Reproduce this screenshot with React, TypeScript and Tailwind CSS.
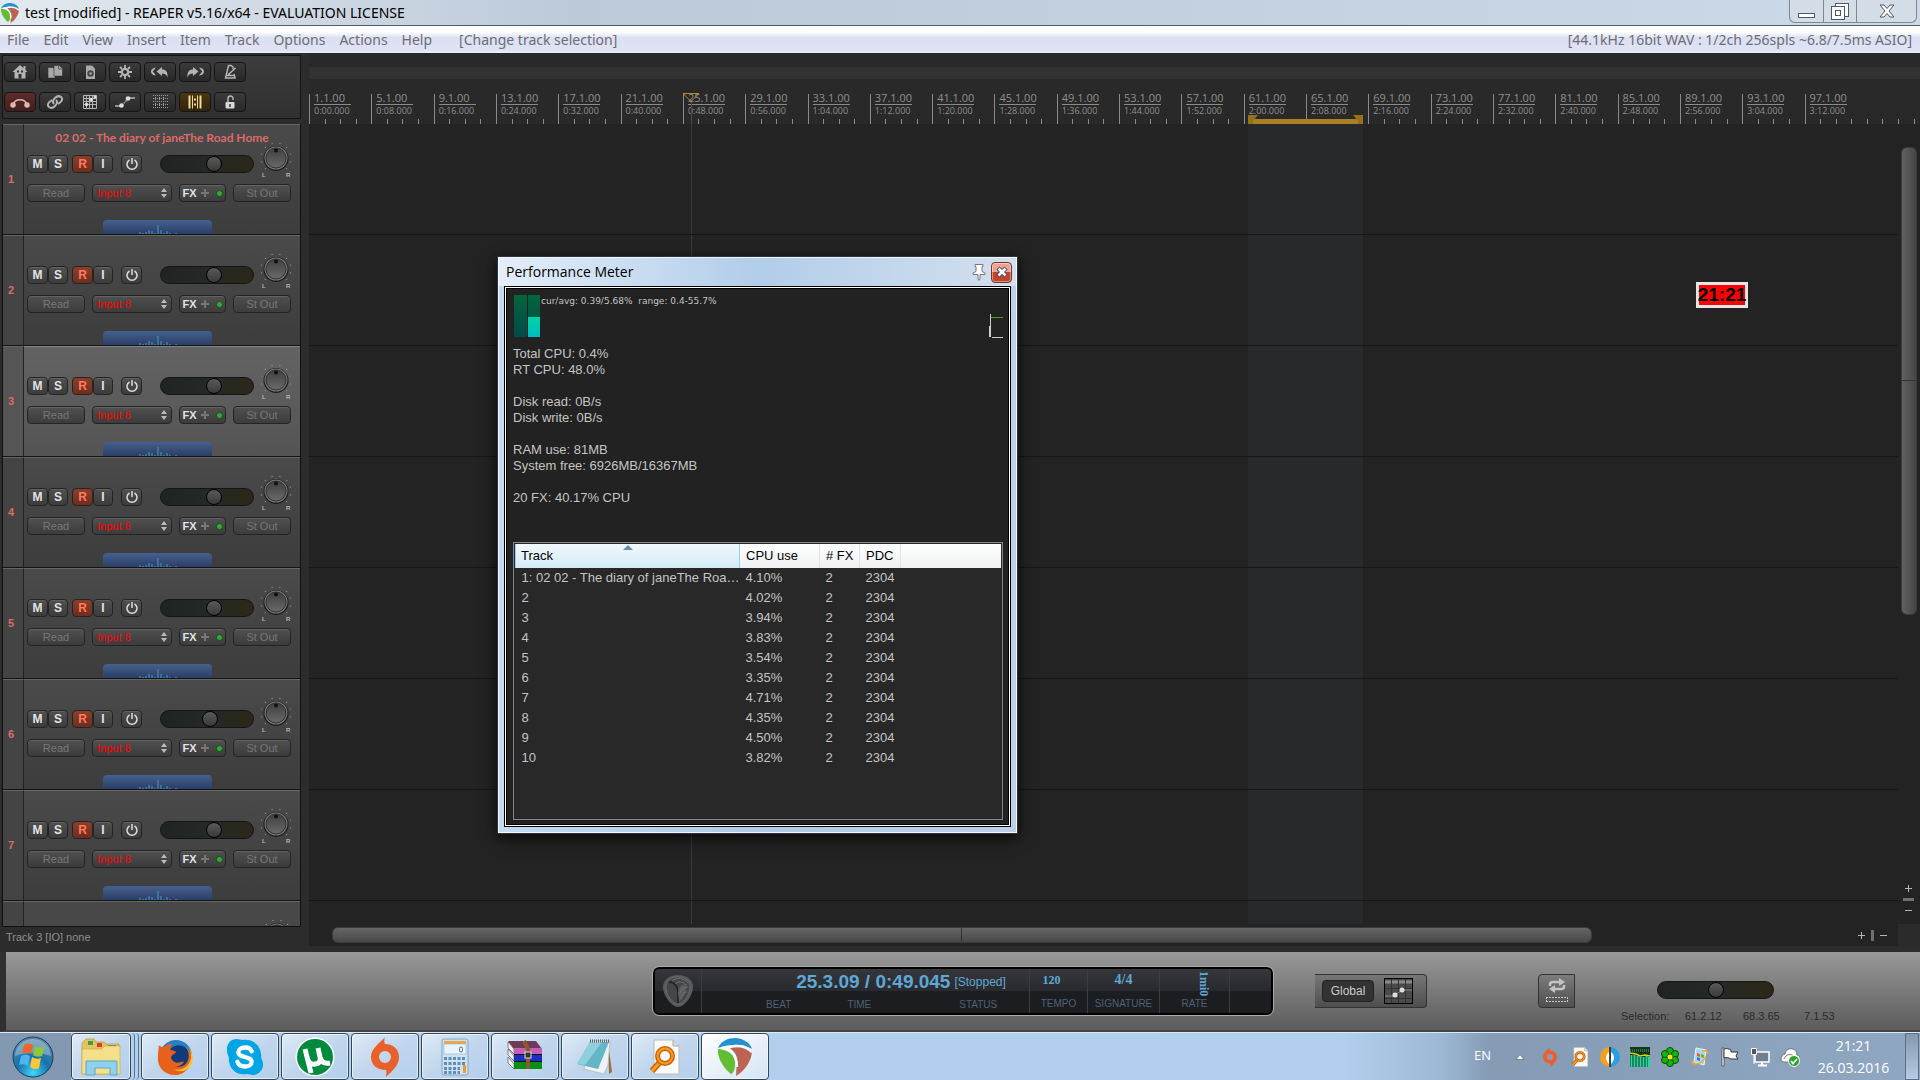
import type { ReactNode } from 'react'
import { clsx } from 'clsx'

// Number of bars that fit in the arrange view
const VISIBLE_BARS = 102
const barToPercent = (bar: number) => `${((bar - 1) / VISIBLE_BARS) * 100}%`

const SELECTION = { start: 61.28, end: 68.66 }
const EDIT_CURSOR = 25.52

const MENUS = ['File', 'Edit', 'View', 'Insert', 'Item', 'Track', 'Options', 'Actions', 'Help']

const TRACKS = [
  { id: 1, name: '02 02 - The diary of janeThe Road Home', volume: 59, cpu: '4.10%' },
  { id: 2, name: '', volume: 59, cpu: '4.02%' },
  { id: 3, name: '', volume: 59, cpu: '3.94%' },
  { id: 4, name: '', volume: 59, cpu: '3.83%' },
  { id: 5, name: '', volume: 59, cpu: '3.54%' },
  { id: 6, name: '', volume: 54, cpu: '3.35%' },
  { id: 7, name: '', volume: 59, cpu: '4.71%' },
  { id: 8, name: '', volume: 59, cpu: '4.35%' },
  { id: 9, name: '', volume: 59, cpu: '4.50%' },
  { id: 10, name: '', volume: 59, cpu: '3.82%' },
]

// Tracks that fit fully in the panel, the next one is only a stub
const FULL_TRACKS = 7
const SELECTED_TRACK = 3

const RULER = Array.from({ length: 25 }, (_, i) => {
  const seconds = i * 8
  return {
    bar: `${i * 4 + 1}.1.00`,
    time: `${Math.floor(seconds / 60)}:${String(seconds % 60).padStart(2, '0')}.000`,
  }
})

const KNOB_DOTS = [-135, -105, -75, -45, -15, 15, 45, 75, 105, 135].map((deg) => {
  const a = ((deg - 90) * Math.PI) / 180
  return { x: 17 + Math.cos(a) * 15, y: 17 + Math.sin(a) * 15 }
})

/* ---------- toolbar icons ---------- */

function ToolIcon({ children }: { children: ReactNode }) {
  return (
    <svg viewBox="0 0 20 16" className="w-5 h-4" fill="none" stroke="#b4b4b4" strokeWidth="1.5">
      {children}
    </svg>
  )
}

const toolbarRows = [
  [
    {
      label: 'New project',
      icon: (
        <g fill="#b4b4b4" stroke="none">
          <path d="M10 1 2.500 8h2v6.500h11V8h2l-2-2V2h-2v2.200z" />
          <path d="M8.500 10h3v4.500h-3zM7 6.500h2v2H7zM11 6.500h2v2h-2z" fill="#303030" />
        </g>
      ),
    },
    {
      label: 'Open project',
      icon: (
        <g fill="#a8a8a8" stroke="#303030" strokeWidth="0.600">
          <path d="M3 3.500h5l2 2V14H3z" />
          <path d="M9 1.500h5l3.500 3V12H9z" />
          <path d="M13.500 1.500v3.500h4" />
        </g>
      ),
    },
    {
      label: 'Save project',
      icon: (
        <g stroke="none">
          <path d="M6 1.500h6l3 3V15H6z" fill="#aaa" />
          <circle cx="10.500" cy="9.500" r="3.200" fill="#444" />
          <circle cx="10.500" cy="9.500" r="1.300" fill="#aaa" />
        </g>
      ),
    },
    {
      label: 'Project settings',
      icon: (
        <g>
          <circle cx="10" cy="8" r="3.200" strokeWidth="2.200" />
          <path d="M10 1v3M10 12v3M3 8h3M14 8h3M5 3l2 2M13 11l2 2M5 13l2-2M13 5l2-2" strokeWidth="1.800" />
        </g>
      ),
    },
    {
      label: 'Undo',
      icon: (
        <g fill="#b4b4b4" stroke="none">
          <path d="M12 3 6.500 7.500 12 12V9.500c3 0 4.500 1 5.500 4C18 8 16 5.500 12 5.500z" />
          <path d="M6 3.500C2 4 1 6 1 7.500S2 11 6 11.500L2.800 7.500z" />
        </g>
      ),
    },
    {
      label: 'Redo',
      icon: (
        <g fill="#b4b4b4" stroke="none">
          <path d="M8 3l5.500 4.500L8 12V9.500c-3 0-4.500 1-5.500 4C2 8 4 5.500 8 5.500z" />
          <path d="M14 3.500c4 .5 5 2.500 5 4s-1 3.500-5 4l3.200-4z" />
        </g>
      ),
    },
    {
      label: 'Metronome',
      icon: (
        <g>
          <path d="M13 5V3L11 1.500H8.500L5.500 14h9.500l-1-4" />
          <path d="M9 10l6.500-6M6 11.500h8M8 10h2" />
        </g>
      ),
    },
  ],
  [
    {
      label: 'Auto-crossfade',
      tone: 'red',
      icon: (
        <g stroke="#e3b5b0">
          <path d="M3 11c2-7 12-7 14 0" />
          <circle cx="3" cy="11" r="2" fill="#e3b5b0" />
          <circle cx="17" cy="11" r="2" fill="#e3b5b0" />
        </g>
      ),
    },
    {
      label: 'Item grouping',
      icon: (
        <g strokeWidth="2">
          <path d="M9 10c-2-2-1-4 1-6s4-2.500 6-1 1 4-1 5.500l-2 1.500" />
          <path d="M11 6c2 2 1 4-1 6s-4 2.500-6 1-1-4 1-5.500L7 6" />
        </g>
      ),
    },
    {
      label: 'Ripple editing',
      icon: (
        <g strokeWidth="1">
          <path d="M3.500 1.500h13v13h-13zM6.500 1v14M9.500 1v14M12.500 1v14M3 4.500h14M3 7.500h14M3 10.500h14" />
          <circle cx="6.500" cy="10.500" r="1.800" fill="#ddd" stroke="none" />
          <circle cx="11" cy="5.500" r="1.800" fill="#ddd" stroke="none" />
          <circle cx="15" cy="3" r="1.500" fill="#ddd" stroke="none" />
        </g>
      ),
    },
    {
      label: 'Envelope points',
      icon: (
        <g>
          <path d="M0 12h6M14 4h6" />
          <path d="M7 11l6-6" strokeDasharray="1.500 1" />
          <circle cx="6.500" cy="11.500" r="2.300" fill="#ddd" stroke="none" />
          <circle cx="13" cy="4.500" r="2.300" fill="#ddd" stroke="none" />
        </g>
      ),
    },
    {
      label: 'Grid lines',
      icon: (
        <g strokeWidth="1" stroke="#999">
          <path d="M3 1.500h15M3 4.500h15M3 7.500h15M3 10.500h15M3 13.500h15" strokeDasharray="1 1" />
          <path d="M5.500 1v14M9.500 1v14M13.500 1v14" strokeDasharray="1 1" />
        </g>
      ),
    },
    {
      label: 'Snap',
      tone: 'amber',
      icon: (
        <g stroke="#f1dc98">
          <path d="M4.500 1.500v13M15.500 1.500v13" strokeWidth="2" />
          <path d="M7.500 1.500v13M12.500 1.500v13" strokeWidth="1" />
          <path d="M9 5.500h2M9 10.500h2" strokeWidth="2" />
        </g>
      ),
    },
    {
      label: 'Locking',
      icon: (
        <g>
          <path d="M8 8V4.500a2.500 2.500 0 0 1 5 0V6" />
          <rect x="5.500" y="8" width="9" height="6.500" rx="1" fill="#d8d8d8" stroke="none" />
          <path d="M10 10v3" stroke="#333" />
        </g>
      ),
    },
  ],
]

function Toolbar() {
  return (
    <div className="h-[71px] shrink-0 bg-[#2c2c2c] pt-[2px]">
      <div className="ml-[2px] flex h-16 w-[299px] flex-col gap-[10px] border border-[#151515] bg-linear-to-b from-[#3c3c3c] to-[#303030] px-px py-[6px]">
        {toolbarRows.map((row, i) => (
          <div key={i} className="flex gap-[3px]">
            {row.map((tool) => (
              <button
                key={tool.label}
                aria-label={tool.label}
                className={clsx(
                  'flex h-5 w-8 items-center justify-center rounded border border-[#151515] bg-linear-to-b',
                  'tone' in tool && tool.tone === 'red' && 'from-[#5e2c29] to-[#3f1f1d]',
                  'tone' in tool && tool.tone === 'amber' && 'from-[#4b3610] to-[#2f240d]',
                  !('tone' in tool) && 'from-[#3a3a3a] to-[#292929]'
                )}
              >
                <ToolIcon>{tool.icon}</ToolIcon>
              </button>
            ))}
          </div>
        ))}
      </div>
    </div>
  )
}

/* ---------- track panel ---------- */

const trackButton =
  'flex items-center justify-center h-[18px] rounded-sm border border-[#242424] bg-linear-to-b from-[#505050] to-[#3c3c3c] shadow-[inset_0_1px_0_#626262]'

const fader =
  'appearance-none rounded-full border border-[#151515] bg-linear-to-r from-[#1f2422] via-[#242826] to-[#2c2718] [&::-webkit-slider-thumb]:appearance-none [&::-webkit-slider-thumb]:size-4 [&::-webkit-slider-thumb]:rounded-full [&::-webkit-slider-thumb]:border [&::-webkit-slider-thumb]:border-black [&::-webkit-slider-thumb]:bg-linear-to-b [&::-webkit-slider-thumb]:from-[#5a5a5a] [&::-webkit-slider-thumb]:to-[#3a3a3a]'

function PanKnob({ labels = true }: { labels?: boolean }) {
  return (
    <svg viewBox="0 0 34 40" className="h-10 w-[34px] shrink-0">
      <defs>
        <linearGradient id="knob" x1="0" y1="0" x2="0" y2="1">
          <stop offset="0" stopColor="#3f3f3f" />
          <stop offset="1" stopColor="#6a6a6a" />
        </linearGradient>
      </defs>
      {KNOB_DOTS.map((d) => (
        <circle key={`${d.x}`} cx={d.x} cy={d.y} r="0.7" fill="#8b8b8b" />
      ))}
      <circle cx="17" cy="17.500" r="12.500" fill="#1d1d1d" />
      <circle cx="17" cy="17" r="11.500" fill="#777" />
      <circle cx="17" cy="17" r="10" fill="url(#knob)" stroke="#303030" />
      <circle cx="17" cy="9.500" r="2" fill="#111" />
      {labels && (
        <g fontSize="6" fontWeight="bold" fill="#b5b5b5" fontFamily="Liberation Sans, sans-serif">
          <text x="3" y="36">L</text>
          <text x="27" y="36">R</text>
        </g>
      )}
    </svg>
  )
}

function TrackPanel({ track }: { track: (typeof TRACKS)[number] }) {
  const selected = track.id === SELECTED_TRACK
  return (
    <div className="flex h-[111px] shrink-0 border-b border-[#141414]">
      <div
        className={clsx(
          'flex w-[21px] items-center justify-center border-t border-r border-t-[#666] border-r-[#222] pr-1 text-[11px] font-bold text-[#dc6a6a]',
          selected ? 'bg-[#555]' : 'bg-[#444]'
        )}
      >
        {track.id}
      </div>
      <div
        className={clsx(
          'flex min-w-0 flex-1 flex-col border-t bg-linear-to-b pl-[3px]',
          selected ? 'border-[#858585] from-[#636363] to-[#545454]' : 'border-[#666] from-[#4a4a4a] to-[#3d3d3d]'
        )}
      >
        <div className="h-[30px] pt-[4px] pr-[3px] text-center font-['Lato','Open_Sans',sans-serif] text-xs leading-[18px] font-bold text-[#dc6a6a]">
          {track.name}
        </div>
        <div className="flex h-[29px] items-start text-xs font-bold text-[#e2e2e2]">
          <button className={clsx(trackButton, 'w-[21px]')}>M</button>
          <button className={clsx(trackButton, 'w-5')}>S</button>
          <button className="ml-1 flex h-[18px] w-[21px] items-center justify-center rounded-sm border border-[#242424] bg-linear-to-b from-[#8b3f2a] to-[#6f2d1d] text-[#ff7a60]">
            R
          </button>
          <button className={clsx(trackButton, 'w-5')}>I</button>
          <button aria-label="Bypass FX" className={clsx(trackButton, 'ml-2 w-[21px]')}>
            <svg viewBox="0 0 14 14" className="size-[14px]" fill="none" stroke="#ddd" strokeWidth="1.500">
              <path d="M4.500 3a5 5 0 1 0 5 0M7 1v6" />
            </svg>
          </button>
          <input
            type="range"
            aria-label={`Track ${track.id} volume`}
            defaultValue={track.volume}
            className={clsx(fader, 'ml-[18px] h-[18px] w-[94px]')}
          />
          <div className="-mt-[14px] ml-[5px] h-[30px]">
            <PanKnob />
          </div>
        </div>
        <div className="flex gap-[7px] text-[11px] text-[#777]">
          <button className={clsx(trackButton, 'w-[58px]')}>Read</button>
          <label className="relative flex">
            <select
              aria-label={`Track ${track.id} input`}
              className={clsx(trackButton, 'w-20 appearance-none pl-1 text-[#f00]')}
            >
              <option>Input 8</option>
            </select>
            <svg viewBox="0 0 6 10" className="absolute top-1 right-[5px] h-[10px] w-[6px]" fill="#bbb">
              <path d="M3 0l3 4H0zM3 10l3-4H0z" />
            </svg>
          </label>
          <button className={clsx(trackButton, 'w-[47px] gap-1')}>
            <span className="font-bold text-[#e2e2e2]">FX</span>
            <svg viewBox="0 0 8 8" className="size-2" stroke="#777" strokeWidth="2">
              <path d="M4 0v8M0 4h8" />
            </svg>
            <span className="ml-[3px] size-[7px] rounded-full border border-[#1c4d1c] bg-[#35a935]" />
          </button>
          <button className={clsx(trackButton, 'w-[58px]')}>St Out</button>
        </div>
        <div className="mt-auto ml-[76px] h-[14px] w-[109px] overflow-hidden rounded-t bg-linear-to-b from-[#46608e] to-[#2b3f66]">
          <svg viewBox="0 0 109 14" className="h-[14px] w-full" stroke="#3f7fb0" strokeWidth="1.500">
            <path d="M37 14v-2M40 14v-1M43 14v-2M46 14v-4M49 14v-3M52 14v-1M55 14V5M58 14v-4M61 14v-1M64 14v-3M67 14v-1M73 14v-1" />
          </svg>
        </div>
      </div>
    </div>
  )
}

function TrackStub() {
  return (
    <div className="flex min-h-0 flex-1 overflow-hidden">
      <div className="w-[21px] border-t border-r border-t-[#666] border-r-[#222] bg-[#444]" />
      <div className="flex flex-1 justify-end border-t border-[#666] bg-[#484848] pt-4 pr-[6px]">
        <PanKnob labels={false} />
      </div>
    </div>
  )
}

/* ---------- arrange view ---------- */

function Ruler() {
  return (
    <div className="h-[71px] shrink-0 overflow-hidden bg-[#292929] pt-[14px] text-[#8f8f8f]">
      <div className="h-3 bg-[#323232]" />
      <div className="relative mt-[15px] mr-[22px] flex h-[30px] font-['Open_Sans',sans-serif]">
        {[...RULER, null].map((mark, i) => (
          <div
            key={i}
            className={clsx('relative shrink-0 pl-1', mark && 'border-l border-[#8a8a8a]')}
            style={{ width: `${400 / VISIBLE_BARS}%` }}
          >
            {mark && (
              <>
                <div className="h-[11px] w-[37px] border-b border-[#8a8a8a] text-[11px] leading-[8px]">{mark.bar}</div>
                <div className="pt-px text-[9px] leading-[10px]">{mark.time}</div>
              </>
            )}
            <div className="absolute inset-x-0 bottom-0 flex h-[5px]">
              {[0, 1, 2, 3].map((t) => (
                <span key={t} className={clsx('flex-1', (t > 0 || !mark) && 'border-l border-[#8a8a8a]')} />
              ))}
            </div>
          </div>
        ))}
        {/* Time selection */}
        <div
          className="absolute bottom-0 h-[9px]"
          style={{
            left: barToPercent(SELECTION.start),
            width: `${((SELECTION.end - SELECTION.start) / VISIBLE_BARS) * 100}%`,
          }}
        >
          <div className="absolute inset-x-0 bottom-0 h-[5px] bg-[#ab8024]" />
          <svg viewBox="0 0 10 9" className="absolute bottom-0 left-0 h-[9px] w-[10px]">
            <path d="M0 0h10L5 6v3H0z" fill="#94701f" />
          </svg>
          <svg viewBox="0 0 10 9" className="absolute right-0 bottom-0 h-[9px] w-[10px]">
            <path d="M10 0H0l5 6v3h5z" fill="#94701f" />
          </svg>
        </div>
        {/* Edit cursor handle */}
        <div className="absolute -top-px bottom-0 w-4 -translate-x-1/2" style={{ left: barToPercent(EDIT_CURSOR) }}>
          <svg viewBox="0 0 16 31" className="h-[31px] w-4" fill="none">
            <path d="M0 .5h16L8 8.500z" stroke="#b98a26" />
            <path d="M8.500 9v22" stroke="#4a4a4a" />
          </svg>
        </div>
      </div>
    </div>
  )
}

function ZoomControl({ vertical }: { vertical?: boolean }) {
  return (
    <div className={clsx('flex items-center gap-[6px]', vertical && 'flex-col')}>
      <button aria-label="Zoom in" className="size-[7px]">
        <svg viewBox="0 0 7 7" className="size-[7px]" stroke="#b5b5b5">
          <path d="M3.500 0v7M0 3.500h7" />
        </svg>
      </button>
      <span className={clsx('bg-[#6f6f6f]', vertical ? 'h-[3px] w-[11px]' : 'h-[11px] w-[3px]')} />
      <button aria-label="Zoom out" className="size-[7px]">
        <svg viewBox="0 0 7 7" className="size-[7px]" stroke="#b5b5b5">
          <path d="M0 3.500h7" />
        </svg>
      </button>
    </div>
  )
}

function ArrangeView() {
  return (
    <section className="flex min-w-0 flex-1 flex-col bg-[#2c2c2c] pb-[6px]">
      <Ruler />
      <div className="flex min-h-0 flex-1 bg-[#232323]">
        <div className="relative min-w-0 flex-1 overflow-hidden">
          <div
            className="absolute inset-y-0 bg-[#28292a]"
            style={{
              left: barToPercent(SELECTION.start),
              width: `${((SELECTION.end - SELECTION.start) / VISIBLE_BARS) * 100}%`,
            }}
          />
          <div className="absolute inset-y-0 w-px bg-[#3a3a3a]" style={{ left: barToPercent(EDIT_CURSOR) }} />
          <div className="relative">
            {TRACKS.slice(0, FULL_TRACKS).map((t) => (
              <div key={t.id} className="h-[111px] border-b border-[#171717]" />
            ))}
          </div>
        </div>
        <div className="flex w-[22px] flex-col items-center justify-between pt-[23px] pr-px pb-[10px]">
          <div className="flex h-[61%] w-4 flex-col justify-center rounded-md border border-[#3c3c3c] bg-linear-to-r from-[#616161] to-[#464646]">
            <span className="h-px bg-[#333]" />
          </div>
          <ZoomControl vertical />
        </div>
      </div>
      <div className="flex h-[22px] items-center bg-[#232323]">
        <div className="flex flex-1 items-center justify-between pr-2 pl-[23px]">
          <div className="flex h-4 w-[81%] justify-center rounded-md border border-[#3c3c3c] bg-linear-to-b from-[#666] to-[#484848]">
            <span className="w-px bg-[#333]" />
          </div>
          <ZoomControl />
        </div>
        <div className="ml-[3px] h-full w-[22px] bg-[#2b2b2b]" />
      </div>
    </section>
  )
}

/* ---------- performance meter ---------- */

function PerformanceMeter() {
  return (
    <div
      role="dialog"
      aria-label="Performance Meter"
      className="absolute top-[256px] left-[497px] flex h-[578px] w-[521px] flex-col border border-[#2b3540] bg-linear-to-r from-[#c3daf2] via-[#b0cbe6] to-[#bcd0e5] shadow-[0_4px_14px_#000c] ring-1 ring-white/80 ring-inset"
    >
      <header className="mx-px mt-px flex h-7 shrink-0 items-center bg-linear-to-r from-[#e3eefa] via-[#b2cde9] to-[#d3dfee] pr-1 pl-[7px]">
        <h2 className="flex-1 font-['Open_Sans',sans-serif] text-sm leading-5 text-black">Performance Meter</h2>
        <button aria-label="Pin window" className="mr-[5px]">
          <svg viewBox="0 0 14 17" className="h-[17px] w-[14px]" fill="#fff" stroke="#777" strokeWidth="1">
            <path d="M3 .5h8v2H10v5l3 1.500v1.500H8V15l-1 1.500L6 15v-4.500H1V9l3-1.500v-5H3z" />
          </svg>
        </button>
        <button
          aria-label="Close"
          className="flex h-[21px] w-[21px] items-center justify-center rounded-sm border border-[#6c3a36] bg-linear-to-b from-[#f0a293] from-50% to-[#c2452a] to-50% shadow-[inset_0_0_0_1px_#ffffff66]"
        >
          <svg viewBox="0 0 12 12" className="size-3">
            <path d="M2 2l8 8M10 2l-8 8" stroke="#4b4b5b" strokeWidth="4.500" />
            <path d="M2.500 2.500l7 7M9.500 2.500l-7 7" stroke="#fff" strokeWidth="2.500" />
          </svg>
        </button>
      </header>
      <div className="mx-[6px] mb-[6px] flex min-h-0 flex-1 flex-col border border-black bg-white p-px">
        <div className="flex min-h-0 flex-1 flex-col border border-black bg-[#222] pr-[5px] pb-[4px] pl-[6px] text-[13px] leading-4 text-[#c4c4c4]">
          <div className="flex h-[57px] pt-[6px] pl-px">
            <div className="flex h-[42px] gap-px">
              <span className="w-[13px] bg-linear-to-b from-[#04663a] to-[#04494a]" />
              <span className="flex w-3 flex-col justify-end bg-linear-to-b from-[#04663a] to-[#04494a]">
                <span className="h-5 bg-linear-to-b from-[#00d4a8] to-[#00bdbd]" />
              </span>
            </div>
            <span className="ml-px flex-1 font-['DejaVu_Sans',sans-serif] text-[9px] leading-3 whitespace-pre">
              cur/avg: 0.39/5.68%{'  '}range: 0.4-55.7%
            </span>
            <svg viewBox="0 0 14 26" className="mt-[18px] h-[26px] w-[14px]" fill="none" stroke="#ccc">
              <path d="M1.500 1v23M.5 13v11M3 24.500h11" />
              <path d="M2 4.500h12" stroke="#4aa514" />
            </svg>
          </div>
          <p>Total CPU: 0.4%</p>
          <p>RT CPU: 48.0%</p>
          <p className="mt-4">Disk read: 0B/s</p>
          <p>Disk write: 0B/s</p>
          <p className="mt-4">RAM use: 81MB</p>
          <p>System free: 6926MB/16367MB</p>
          <p className="mt-4">20 FX: 40.17% CPU</p>
          <div className="mt-9 min-h-0 flex-1 border border-[#85858d] bg-[#282828] p-px">
            <table className="w-full table-fixed">
              <thead>
                <tr className="h-6 bg-linear-to-b from-white to-[#eff1f3] text-left text-black">
                  <th className="relative w-[224px] border-r border-l border-[#8fd3f2] bg-linear-to-b from-[#f0f8fc] to-[#d5ebf5] pl-[5px] font-normal">
                    Track
                    <svg viewBox="0 0 10 5" className="absolute top-px left-1/2 h-[5px] w-[10px] -translate-x-1/2">
                      <path d="M0 5l5-5 5 5z" fill="#5d93b0" />
                    </svg>
                  </th>
                  <th className="w-20 border-r border-[#dfe2e6] pl-[6px] font-normal">CPU use</th>
                  <th className="w-10 border-r border-[#dfe2e6] pl-[6px] font-normal whitespace-nowrap"># FX</th>
                  <th className="w-[41px] border-r border-[#dfe2e6] pl-[6px] font-normal">PDC</th>
                  <th />
                </tr>
              </thead>
              <tbody>
                {TRACKS.map((t) => (
                  <tr key={t.id} className="h-5">
                    <td className="truncate pl-[6px]">{t.name ? `${t.id}: ${t.name}` : t.id}</td>
                    <td className="pl-[6px]">{t.cpu}</td>
                    <td className="pl-[6px]">2</td>
                    <td className="pl-[6px]">2304</td>
                    <td />
                  </tr>
                ))}
              </tbody>
            </table>
          </div>
        </div>
      </div>
    </div>
  )
}

/* ---------- transport ---------- */

const transportCell = 'flex flex-col items-center justify-between border-l border-[#3c3d42] pt-[2px] pb-[2px]'
const transportLabel = 'text-[10px] leading-[14px] text-[#4f6177]'

function Transport() {
  return (
    <section className="flex h-20 shrink-0 items-center border-b-2 border-l-[6px] border-[#444] border-l-[#303030] bg-linear-to-b from-[#999] to-[#5c5c5c]">
      <div className="flex-[647]" />
      <div className="flex h-12 w-[620px] rounded-md border-2 border-black bg-linear-to-b from-[#36373c] from-0% via-[#292a2e] via-50% to-[#1c1d21] to-50% text-[#5fa8d6] outline outline-[#aaa]">
        <div className="flex w-[46px] items-center justify-center">
          <svg viewBox="0 0 32 34" className="h-[34px] w-8">
            <path d="M16 1C25 1 31 6 31 13c0 9-9 20-15 20S1 22 1 13C1 6 7 1 16 1z" fill="#5a5a5c" />
            <path d="M16 3c7 0 12 4 12 10 0 8-7 17-12 17S4 21 4 13C4 7 9 3 16 3z" fill="#454649" stroke="#7a7a7a" strokeWidth=".6" />
            <path d="M7 8c6 0 9 5 9 11v10" fill="none" stroke="#1f1f22" strokeWidth="1.500" />
            <path d="M16 19c0-6 3-9 9-9-1 8-3 14-8 18" fill="#5b5b5e" />
            <path d="M13 10c3-3 8-3 11 1M10 7c5-4 12-3 16 2M18 19c1-4 4-6 8-6M19 24c1-4 3-6 6-6" fill="none" stroke="#808080" strokeWidth=".7" />
          </svg>
        </div>
        <div className="flex flex-1 flex-col justify-between border-l border-[#3c3d42] pb-px">
          <div className="flex items-center justify-center gap-1 pt-px pl-[71px] leading-6">
            <span className="text-[19px] font-bold">25.3.09 / 0:49.045</span>
            <span className="text-xs">[Stopped]</span>
          </div>
          <div className={clsx(transportLabel, 'flex gap-14 pl-16')}>
            <span>BEAT</span>
            <span className="mr-8">TIME</span>
            <span>STATUS</span>
          </div>
        </div>
        <div className={clsx(transportCell, 'w-[58px]')}>
          <span className="mr-[14px] font-['Liberation_Serif',serif] text-xs leading-[18px] font-bold">120</span>
          <span className={transportLabel}>TEMPO</span>
        </div>
        <div className={clsx(transportCell, 'w-[72px]')}>
          <span className="font-['Liberation_Serif',serif] text-sm leading-[18px] font-bold">4/4</span>
          <span className={transportLabel}>SIGNATURE</span>
        </div>
        <div className={clsx(transportCell, 'w-[70px]')}>
          <span className="ml-[18px] h-[26px] font-['Liberation_Serif',serif] text-xs leading-3 font-bold [writing-mode:vertical-rl]">
            1mi0
          </span>
          <span className={transportLabel}>RATE</span>
        </div>
        <div className="w-[42px] border-l border-[#3c3d42]" />
      </div>
      <div className="flex flex-[647] items-center">
        <div className="ml-[42px] flex h-[34px] w-28 items-center justify-between rounded-r border-y border-r border-[#333] bg-linear-to-b from-[#777] to-[#4e4e4e] pr-[13px] pl-[7px]">
          <button className="h-[22px] w-[52px] rounded-sm border border-[#222] bg-[#333] text-xs text-[#ccc]">Global</button>
          <button aria-label="Automation mode" className="h-[26px] w-[29px] border border-black bg-[#4b4b4b]">
            <svg viewBox="0 0 27 24" className="h-6 w-[27px]" fill="none">
              <path d="M0 3h27" stroke="#8a8a8a" strokeWidth="3" />
              <path d="M6.500 0v24M13.500 0v24M20.500 0v24M0 9.500h27M0 19.500h27" stroke="#333" />
              <path d="M0 17h9l8-6h10" stroke="#888" />
              <circle cx="10" cy="16" r="2.500" fill="#ddd" />
              <circle cx="17" cy="11" r="2.500" fill="#ddd" />
            </svg>
          </button>
        </div>
        <button
          aria-label="Toggle repeat"
          className="ml-[111px] flex h-[34px] w-[37px] items-center justify-center rounded-l border border-[#333] bg-linear-to-b from-[#7c7c7c] to-[#505050]"
        >
          <svg viewBox="0 0 24 28" className="h-7 w-6" fill="none" stroke="#c4c4c4">
            <path d="M5 9V7.500C5 6 6 5 8 5h7" strokeWidth="2.500" />
            <path d="M19 8v1.500c0 1.500-1 2.500-3 2.500H9" strokeWidth="2.500" />
            <path d="M14 1l6 4-6 4zM10 8l-6 4 6 4z" fill="#c4c4c4" stroke="none" />
            <path d="M1 20.500h22M1 24.500h22M1.500 20v5M22.500 20v5" strokeDasharray="2 1" />
          </svg>
        </button>
        <div className="mt-[21px] ml-[46px] flex flex-col gap-[10px]">
          <input
            type="range"
            aria-label="Playback rate"
            defaultValue={50}
            className={clsx(fader, 'ml-9 h-[18px] w-[117px]')}
          />
          <div className="flex text-[11px] leading-[14px] text-[#2b2b2b]">
            <span className="w-16">Selection:</span>
            <span className="w-[58px]">61.2.12</span>
            <span className="w-[61px]">68.3.65</span>
            <span>7.1.53</span>
          </div>
        </div>
      </div>
    </section>
  )
}

/* ---------- taskbar ---------- */

function ReaperLogo({ className }: { className: string }) {
  return (
    <svg viewBox="0 0 36 38" className={className}>
      <path d="M1 10C4 3 11 0 18 0s15 4 17 11c-8-5-20-6-34-1z" fill="#2492cf" />
      <path d="M1 11c-1 7 4 18 13 25 3-1 4-6 4-11 0-7-5-13-17-14z" fill="#62bd33" />
      <path d="M12 10c8-4 17-3 23 3 0 9-7 20-16 25 1-12 2-22-7-28z" fill="#bb6454" />
      <path d="M5 10c9-1 15 7 15 19M10 10c9-4 19-2 25 4" fill="none" stroke="#fff" strokeWidth="2.500" />
    </svg>
  )
}

function OriginLogo({ className }: { className: string }) {
  return (
    <svg viewBox="0 0 32 40" className={className}>
      <path
        d="M16 0c-1 3-1 5 0 7 9 0 14 6 14 13 0 9-8 15-13 20 0-3 1-5 0-7C7 33 2 27 2 20 2 11 11 6 16 0zm0 14a6 6 0 1 0 0 12 6 6 0 0 0 0-12z"
        fill="#e9602c"
        fillRule="evenodd"
      />
    </svg>
  )
}

function SearchDocIcon({ className }: { className: string }) {
  return (
    <svg viewBox="0 0 32 36" className={className}>
      <path d="M5 1h19l6 6v28H5z" fill="#fafafa" stroke="#bbb" />
      <path d="M24 1v6h6" fill="#ddd" stroke="#aaa" />
      <path d="M12 22l-9 10" stroke="#c95e0c" strokeWidth="6" />
      <path d="M12 22l-9 10" stroke="#f7a11b" strokeWidth="3" />
      <circle cx="16" cy="17" r="7.500" fill="#f6f6ff" stroke="#d0600c" strokeWidth="5" />
      <circle cx="16" cy="17" r="7.500" fill="none" stroke="#f9a01c" strokeWidth="2" />
    </svg>
  )
}

const TASKS = [
  {
    name: 'Firefox',
    icon: (
      <svg viewBox="0 0 40 40" className="size-9">
        <circle cx="21" cy="19" r="18" fill="#2a7fc4" />
        <circle cx="24" cy="19" r="12" fill="#123a78" />
        <path d="M2 7c2 2 4 2 6 2 3-3 6-4 9-3-2 2-3 4-2 6 2 1 5 1 6 2 0 2-3 3-5 5-1 3 1 6 5 7 3 1 6-1 9-1-2 4-6 6-11 5 9 3 15-2 16-9 1-5-1-10-3-13 5 5 8 12 6 18-3 9-10 14-18 14C8 40 0 31 1 20c0-5 1-9 1-13z" fill="#e6611c" />
        <path d="M34 8c5 7 5 14 1 20-4 5-10 7-16 6 8 4 17 1 20-8 2-7-1-14-5-18z" fill="#fbc02d" />
      </svg>
    ),
  },
  {
    name: 'Skype',
    icon: (
      <svg viewBox="0 0 40 40" className="size-[38px]">
        <path d="M11 1c3 0 5 1 6 1 12-2 21 7 20 19 1 2 2 4 2 7 0 6-5 11-11 11-2 0-4-1-6-1C10 40 2 31 3 20c-1-2-2-4-2-8C1 6 5 1 11 1z" fill="#00a5e5" />
        <path
          d="M27 14c-1-3-4-4-7-4-4 0-7 2-7 5 0 6 14 4 14 10 0 3-3 5-7 5s-7-2-8-5"
          fill="none"
          stroke="#fff"
          strokeWidth="4.500"
          strokeLinecap="round"
        />
      </svg>
    ),
  },
  {
    name: 'uTorrent',
    icon: (
      <svg viewBox="0 0 40 40" className="size-10">
        <circle cx="20" cy="20" r="19.500" fill="#fff" />
        <circle cx="20" cy="20" r="18" fill="#008a3e" />
        <path d="M10 12l6 24M12 20c1 5 4 8 8 7 4 0 6-3 5-7l-2-9M25 20c1 5 4 7 10 6" fill="none" stroke="#fff" strokeWidth="5" />
      </svg>
    ),
  },
  { name: 'Origin', icon: <OriginLogo className="h-10 w-8" /> },
  {
    name: 'Calculator',
    icon: (
      <svg viewBox="0 0 28 38" className="h-[38px] w-7">
        <rect x="1" y="1" width="26" height="36" rx="2" fill="#cfe1f2" stroke="#7fa6c8" />
        <rect x="3" y="3" width="22" height="3" fill="#f0a544" />
        <rect x="3" y="6" width="22" height="10" fill="#eaf4fb" stroke="#8db0cc" strokeWidth=".6" />
        <rect x="18.500" y="9" width="3" height="5" rx="1.500" fill="none" stroke="#4b6f93" />
        <path d="M3 20.500h22M3 25.500h22M3 30.500h16M3 34.500h16" stroke="#5f8cb8" strokeWidth="3" strokeDasharray="3 1.500" />
        <rect x="22" y="27" width="3" height="8" fill="#ee9a30" />
      </svg>
    ),
  },
  {
    name: 'WinRAR',
    icon: (
      <svg viewBox="0 0 36 30" className="mb-1 h-[30px] w-9">
        <path d="M1 1l6 8h28l-6-8z" fill="#6d3a58" />
        <path d="M1 2v6l6 6V9zM1 9v6l6 6v-5zM1 17v6l6 6v-5z" fill="#eee" stroke="#444" strokeWidth=".6" />
        <path d="M7 8h28v6H7z" fill="#c45fb4" />
        <path d="M7 15h28v6H7z" fill="#1c2fc4" />
        <path d="M7 22h28v7H7z" fill="#0b8f12" />
        <path d="M7 14.500h28M7 21.500h28" stroke="#111" />
        <path d="M17 1l4 8v20" fill="none" stroke="#8a5a2b" strokeWidth="4" />
        <rect x="18" y="12" width="6" height="6" fill="#333" stroke="#ddd" />
      </svg>
    ),
  },
  {
    name: 'Notepad',
    icon: (
      <svg viewBox="0 0 38 36" className="h-9 w-[38px]">
        <path d="M32 3l4 30-3 2z" fill="#99713a" />
        <path d="M14 2h20l-2 24-4 9-20-5z" fill="#eef2f4" stroke="#a9b4b8" strokeWidth=".7" />
        <path d="M14 3h19L22 30 1 25z" fill="#62b6c6" />
        <path d="M14 3h12L9 26l-8-1z" fill="#8fd0dc" />
        <path d="M14 2h20" stroke="#666" strokeWidth="3" strokeDasharray="1 1" />
      </svg>
    ),
  },
  { name: 'Search', icon: <SearchDocIcon className="h-9 w-8" /> },
  { name: 'REAPER', icon: <ReaperLogo className="h-[38px] w-9" />, active: true },
]

const TRAY = [
  { name: 'Origin', icon: <OriginLogo className="h-5 w-4" /> },
  { name: 'Search', icon: <SearchDocIcon className="h-5 w-[18px]" /> },
  {
    name: 'Audio driver',
    icon: (
      <svg viewBox="0 0 20 20" className="size-5">
        <path d="M10 0a10 10 0 0 0 0 20z" fill="#f5a01f" />
        <path d="M10 0a10 10 0 0 1 0 20z" fill="#2b9fe0" />
        <path d="M9 5c-4 3-4 8 0 12zM11 5c4 3 4 8 0 12z" fill="#fff" />
        <path d="M10 0v20" stroke="#222" strokeWidth="1.500" />
      </svg>
    ),
  },
  {
    name: 'CPU graph',
    icon: (
      <svg viewBox="0 0 20 20" className="size-5">
        <rect width="20" height="20" fill="#12351c" />
        <path d="M1.500 8v12M4.500 8v12M7.500 9v11M10.500 10v10M13.500 10v10M16.500 9v11M19 10v10" stroke="#27d5a3" strokeWidth="2" />
        <path d="M0 3.500h20" stroke="#2c7a34" strokeWidth="3" strokeDasharray="1 1" />
        <path d="M0 6l6 1 4 2 5-1 5 1" stroke="#d8d01d" strokeWidth="1.500" fill="none" />
      </svg>
    ),
  },
  {
    name: 'ICQ',
    icon: (
      <svg viewBox="0 0 20 20" className="size-5" fill="#17b50f" stroke="#064d04">
        <circle cx="10" cy="4" r="3.500" />
        <circle cx="15" cy="7" r="3.500" />
        <circle cx="15" cy="13" r="3.500" />
        <circle cx="10" cy="16" r="3.500" />
        <circle cx="5" cy="13" r="3.500" />
        <circle cx="5" cy="7" r="3.500" />
        <circle cx="10" cy="10" r="2.500" fill="#ffe11a" stroke="none" />
      </svg>
    ),
  },
  {
    name: 'Windows Update',
    icon: (
      <svg viewBox="0 0 20 20" className="size-5">
        <path d="M6 1l10 2-2 15-10-3z" fill="#a9d6f3" stroke="#e8f5ff" />
        <path d="M7 6l3 1v3L7 9z" fill="#ec5b2a" />
        <path d="M11 7l3 1v3l-3-1z" fill="#5fbb35" />
        <path d="M7 10l3 1v3l-3-1z" fill="#2c7fd0" />
        <path d="M1 14c3 5 12 3 15-5" fill="none" stroke="#f5a52a" strokeWidth="1.500" />
        <path d="M12 4c3-1 6 0 6 3" fill="none" stroke="#f5a52a" strokeWidth="1.500" />
      </svg>
    ),
  },
  {
    name: 'Action Center',
    icon: (
      <svg viewBox="0 0 20 20" className="size-5">
        <path d="M2 1v18h2V1z" fill="#fff" stroke="#333" strokeWidth=".7" />
        <path d="M4 2c3-1 5 0 7 1v2h7l-2 4 2 3h-7c-2-1-4-2-7-1z" fill="#fff" stroke="#333" />
      </svg>
    ),
  },
  {
    name: 'Network',
    icon: (
      <svg viewBox="0 0 20 20" className="size-5">
        <path d="M5 5h14v10H5z" fill="#6f7f90" stroke="#fff" strokeWidth="1.500" />
        <path d="M8 18.500h9M12 15v3" stroke="#fff" strokeWidth="2" />
        <path d="M1.500 1.500h5v6h-5zM4 8v9" fill="#555" stroke="#fff" />
      </svg>
    ),
  },
  {
    name: 'Cloud sync',
    icon: (
      <svg viewBox="0 0 20 20" className="size-5">
        <path d="M1 12c0-3 2-4 4-5C6 3 9 1 12 2c3 0 5 3 5 6 2 0 3 2 3 4s-2 3-4 3H5c-3 0-4-1-4-3z" fill="#fff" stroke="#555" strokeWidth=".7" />
        <path d="M4 12c2-5 7-6 11-2" fill="none" stroke="#777" />
        <circle cx="14" cy="14" r="5.500" fill="#27a52c" stroke="#fff" />
        <path d="M11 14l2 2.500 4-4.500" fill="none" stroke="#fff" strokeWidth="1.800" />
      </svg>
    ),
  },
]

const taskButton =
  'flex h-[47px] items-center justify-center rounded-sm border border-[#33475c] bg-linear-to-br from-[#dfeaf6] via-[#c1d6ed] to-[#b4cfec] shadow-[inset_0_0_0_1px_#ffffff99]'

function Taskbar() {
  return (
    <footer className="flex h-12 shrink-0 border-t border-[#dbe9f6] bg-[#b2d0ee] font-['Open_Sans',sans-serif]">
      <button aria-label="Start" className="flex w-[71px] shrink-0 items-center bg-[#8299b1] pl-3">
        <svg viewBox="0 0 42 42" className="size-[42px]">
          <defs>
            <radialGradient id="orb" cx="0.5" cy="0.9" r="0.9">
              <stop offset="0" stopColor="#3fd8f8" />
              <stop offset="0.45" stopColor="#1672ac" />
              <stop offset="1" stopColor="#5e87a8" />
            </radialGradient>
          </defs>
          <circle cx="21" cy="21" r="20" fill="url(#orb)" stroke="#1d3f5e" />
          <path d="M3 20C4 7 14 3 21 3s17 4 18 17c-10-4-26-4-36 0z" fill="#fff" opacity=".3" />
          <path d="M12 9c3-2 6-2 9 0l-2 9c-3-2-6-2-9 0z" fill="#f0642a" />
          <path d="M23 10c3 2 6 2 10 0l-3 10c-3 1-6 1-9-1z" fill="#8fc63c" />
          <path d="M9 20c3-2 6-2 9 0l-2 10c-3-2-6-2-9-1z" fill="#4db4ee" />
          <path d="M20 21c3 2 6 2 9 1l-2 10c-3 2-6 1-9-1z" fill="#fbc63a" />
        </svg>
      </button>
      <div className="flex gap-[2px]">
        <div className="flex w-[68px] shrink-0">
          <button aria-label="Explorer" className={clsx(taskButton, 'w-[60px]')}>
            <svg viewBox="0 0 40 38" className="h-[38px] w-10">
              <path d="M3 3l2-2h8l2 3h8l2 2h13v30H1V5z" fill="#e3c45f" stroke="#b8953a" strokeWidth=".7" />
              <path d="M7 3h5v4H7z" fill="#3f9a4b" />
              <path d="M16 5h5v4h-5z" fill="#d4412e" />
              <path d="M27 7h8v3h-8z" fill="#3c85c9" />
              <path d="M1 11l20 0 3-3h15v28H1z" fill="#f4e08c" stroke="#cfae4e" strokeWidth=".7" />
              <path d="M5 23h31v14h-7v-7H14v7H5z" fill="#8fd0ea" stroke="#5ba7cb" />
            </svg>
          </button>
          <span className="h-[47px] w-1 rounded-r-sm border-r border-[#5b7590]" />
          <span className="h-[47px] w-1 rounded-r-sm border-r border-[#5b7590]" />
        </div>
        {TASKS.map((task) => (
          <button
            key={task.name}
            aria-label={task.name}
            className={clsx(taskButton, 'w-[68px] shrink-0', task.active && 'from-white via-[#e9f1fa] to-[#d5e4f4]')}
          >
            {task.icon}
          </button>
        ))}
      </div>
      <div className="flex-1 bg-linear-to-r from-[#b2d0ee] from-85% to-[#9db8d4]" />
      <div className="flex items-center bg-linear-to-r from-[#9db8d4] via-[#859bb4] via-10% to-[#8fa7c2] pl-8 text-white">
        <span className="mb-1 text-[13px] leading-4">EN</span>
        <button aria-label="Show hidden icons" className="mr-[15px] ml-6">
          <svg viewBox="0 0 10 6" className="h-[6px] w-[10px]">
            <path d="M5 .5l4 5H1z" fill="#fff" stroke="#445" strokeWidth=".5" />
          </svg>
        </button>
        <div className="flex gap-[10px]">
          {TRAY.map((item) => (
            <button key={item.name} aria-label={item.name} className="flex w-5 justify-center">
              {item.icon}
            </button>
          ))}
        </div>
        <time className="w-[105px] pl-[2px] text-center text-sm leading-[22px]">
          <div>21:21</div>
          <div>26.03.2016</div>
        </time>
        <button
          aria-label="Show desktop"
          className="mr-px h-full w-[14px] border border-[#5d7085] bg-linear-to-b from-[#8399ae] to-[#b5cde4]"
        />
      </div>
    </footer>
  )
}

/* ---------- window chrome ---------- */

function TitleBar() {
  return (
    <header className="flex h-[26px] shrink-0 justify-between border-b border-[#555b64] bg-linear-to-r from-[#e3e9f0] from-0% via-[#bccad8] via-30% to-[#ccd9e6] pr-[3px]">
      <div className="flex items-center gap-[5px] pt-px">
        <ReaperLogo className="h-5 w-5" />
        <h1 className="font-['Noto_Sans',sans-serif] text-sm leading-6 text-black">
          test [modified] - REAPER v5.16/x64 - EVALUATION LICENSE
        </h1>
      </div>
      <div className="flex h-[23px] divide-x divide-[#7d8894] rounded-b-md border border-t-0 border-[#7d8894] bg-[#d3dde7]">
        <button aria-label="Minimize" className="flex w-[34px] items-center justify-center pt-[9px]">
          <svg viewBox="0 0 17 5" className="h-[5px] w-[17px]">
            <rect x=".5" y=".5" width="16" height="4" fill="#fff" stroke="#535666" />
          </svg>
        </button>
        <button aria-label="Restore" className="flex w-[33px] items-center justify-center">
          <svg viewBox="0 0 18 17" className="h-[17px] w-[18px]" fill="#fff" stroke="#535666">
            <rect x="4.500" y=".5" width="13" height="13" />
            <rect x=".5" y="3.500" width="13" height="13" />
            <rect x="4.500" y="7.500" width="5" height="5" />
          </svg>
        </button>
        <button aria-label="Close" className="flex w-[59px] items-center justify-center">
          <svg viewBox="0 0 16 14" className="h-[14px] w-4">
            <path d="M1 1h4l3 3.500L11 1h4l-5 6 5 6h-4L8 9.500 5 13H1l5-6z" fill="#fff" stroke="#535666" />
          </svg>
        </button>
      </div>
    </header>
  )
}

function MenuBar() {
  return (
    <nav className="flex h-[27px] shrink-0 items-center border-t border-b-2 border-t-white border-b-[#e9ecf6] bg-linear-to-b from-white from-20% via-[#dbe0f2] via-45% to-[#dfe3f5] pt-[2px] pr-2 pl-[7px] font-['Noto_Sans',sans-serif] text-sm leading-5 text-[#6e6e74]">
      <div className="flex gap-[14px]">
        {MENUS.map((menu) => (
          <button key={menu}>{menu}</button>
        ))}
      </div>
      <span className="ml-[27px]">[Change track selection]</span>
      <span className="ml-auto">[44.1kHz 16bit WAV : 1/2ch 256spls ~6.8/7.5ms ASIO]</span>
    </nav>
  )
}

export default function App() {
  return (
    <div className="relative flex h-screen flex-col overflow-hidden bg-[#2c2c2c] font-['Liberation_Sans',Arial,sans-serif]">
      <TitleBar />
      <MenuBar />
      <main className="flex min-h-0 flex-1">
        <aside className="flex w-[309px] shrink-0 flex-col">
          <Toolbar />
          <div className="ml-[2px] flex min-h-0 w-[299px] flex-1 flex-col overflow-hidden border-r border-b border-l border-[#111]">
            {TRACKS.slice(0, FULL_TRACKS).map((track) => (
              <TrackPanel key={track.id} track={track} />
            ))}
            <TrackStub />
          </div>
          <p className="h-[25px] pl-[6px] text-[11px] leading-5 text-[#8f8f8f]">Track 3 [IO] none</p>
        </aside>
        <ArrangeView />
      </main>
      <Transport />
      <Taskbar />
      <PerformanceMeter />
      {/* Floating desktop clock */}
      <time className="absolute top-[282px] left-[1696px] flex h-[26px] w-[52px] items-center justify-center border-[3px] border-[#e6e6e6] bg-[#f00] text-[19px] leading-5 font-bold text-black">
        21:21
      </time>
    </div>
  )
}
